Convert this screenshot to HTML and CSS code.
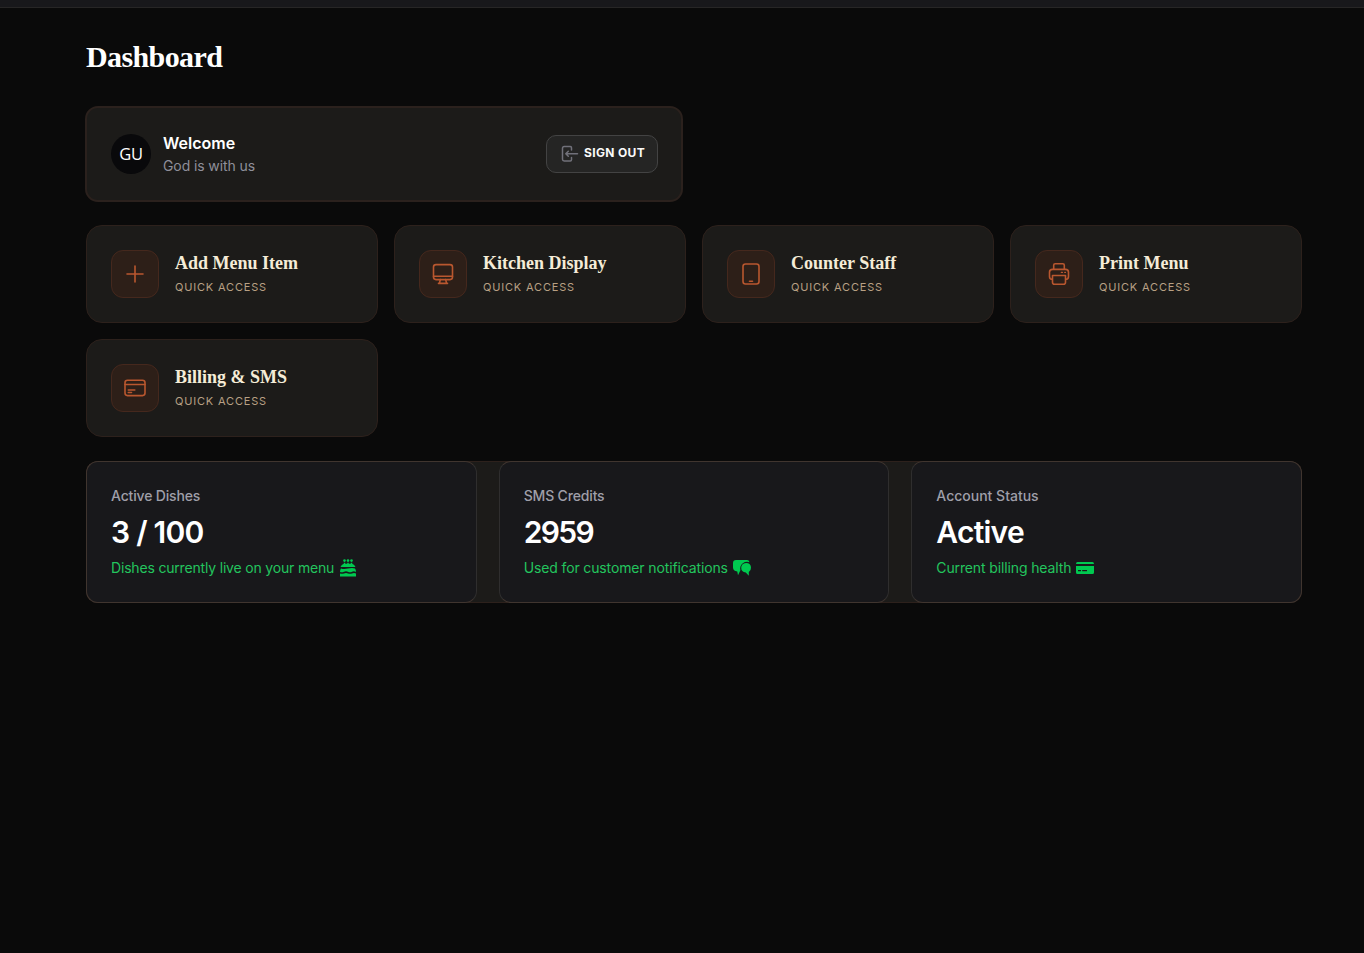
FILE: index.html
```html
<!DOCTYPE html>
<html lang="en">
<head>
<meta charset="utf-8">
<title>Dashboard</title>
<link rel="stylesheet" href="styles.css">
</head>
<body>
<header class="topbar"></header>
<main class="page">
  <h1 class="title">Dashboard</h1>
  <section class="welcome">
    <div class="avatar">GU</div>
    <div class="greeting">
      <div class="greeting-title"><span>Welcome</span></div>
      <div class="greeting-sub"><span>God is with us</span></div>
    </div>
    <button class="signout">
      <svg width="18" height="18" viewBox="0 0 18 18" fill="none" stroke="currentColor" stroke-width="1.5" stroke-linecap="round" stroke-linejoin="round"><path d="M10.500 5V2.700Q10.500 1.500 9.300 1.500H3.200Q1.500 1.500 1.500 3.200V14.300Q1.500 16 3.200 16H9.300Q10.500 16 10.500 14.800V12.500M16.500 8.800H5M7.300 6.300L4.800 8.800L7.300 11.300"/></svg>
      <span>SIGN OUT</span>
    </button>
  </section>
  <section class="actions">
    <a class="action">
      <span class="tile"><svg width="24" height="24" viewBox="0 0 24 24"><path d="M12 4v16M4 12h16"/></svg></span>
      <span class="action-text"><span class="action-name">Add Menu Item</span><span class="action-sub">QUICK ACCESS</span></span>
    </a>
    <a class="action">
      <span class="tile"><svg width="24" height="24" viewBox="0 0 24 24"><rect x="2.500" y="2.600" width="19" height="15" rx="2.500"/><path d="M2.500 14.300h19M9.300 17.600l-.8 3.600M14.700 17.600l.8 3.600M7.500 21.400h9"/></svg></span>
      <span class="action-text"><span class="action-name">Kitchen Display</span><span class="action-sub">QUICK ACCESS</span></span>
    </a>
    <a class="action">
      <span class="tile"><svg width="24" height="24" viewBox="0 0 24 24"><rect x="4" y="2" width="16" height="20" rx="2.500"/><path d="M10.500 19.300h3"/></svg></span>
      <span class="action-text"><span class="action-name">Counter Staff</span><span class="action-sub">QUICK ACCESS</span></span>
    </a>
    <a class="action">
      <span class="tile"><svg width="24" height="24" viewBox="0 0 24 24"><path d="M6.700 7.300V3.300Q6.700 1.800 8.200 1.800h7.600Q17.300 1.800 17.300 3.300v4M5.500 17.500Q2.500 17.500 2.500 14.500V10.300Q2.500 7.400 5.500 7.400h13Q21.500 7.400 21.500 10.300v4.200Q21.500 17.500 18.500 17.500M5.500 13.500h13v6.700Q18.500 22.200 16.500 22.200h-9Q5.500 22.200 5.500 20.200z"/><path d="M14.300 10.400h1.200M17.700 10.400h.8" stroke-width="1.200"/></svg></span>
      <span class="action-text"><span class="action-name">Print Menu</span><span class="action-sub">QUICK ACCESS</span></span>
    </a>
    <a class="action">
      <span class="tile"><svg width="24" height="24" viewBox="0 0 24 24"><rect x="2" y="4.300" width="20" height="15.300" rx="2.500"/><path d="M2 8.500h20M5.300 14h6.500M5.300 16.500h3.200"/></svg></span>
      <span class="action-text"><span class="action-name">Billing &amp; SMS</span><span class="action-sub">QUICK ACCESS</span></span>
    </a>
  </section>
  <section class="stats">
    <article class="stat dishes">
      <div class="label">Active Dishes</div>
      <div class="value">3 / 100</div>
      <div class="note"><span>Dishes currently live on your menu</span>
        <svg width="18" height="18" viewBox="0 0 18 18"><circle cx="5.500" cy="1.600" r="1.300"/><circle cx="9" cy="1.600" r="1.300"/><circle cx="12.500" cy="1.600" r="1.300"/><path d="M4.800 3.700H6.200V4.700H8.300V3.700H9.700V4.700H11.800V3.700H13.200V4.700Q15.600 5.500 16.500 8H1.500Q2.400 5.500 4.800 4.700zM2 9.500Q5 10.500 9 9.600T16 9.500Q17 10.500 17 13Q15 11.800 13 12.800T9 12.800T5 12.800T1 13Q1 10.500 2 9.500zM1 14.400Q3 15.300 5 14.400T9 14.400T13 14.400T17 14.400V17.500H1z"/></svg></div>
    </article>
    <article class="stat sms">
      <div class="label">SMS Credits</div>
      <div class="value">2959</div>
      <div class="note"><span>Used for customer notifications</span>
        <svg width="18" height="18" viewBox="0 0 18 18"><path d="M3 1h11Q16 1 16.500 3.200Q13 2 9.800 4.200Q6.400 7 7.400 11.300L5 16.300L4.300 12.500Q0 12 0 8.500V4Q0 1 3 1z"/><path d="M13 4Q18 4 18 8.700Q18 11.800 15.800 13V16.800L12.800 13.600Q8.200 13 8.200 8.800T13 4z"/></svg></div>
    </article>
    <article class="stat account">
      <div class="label">Account Status</div>
      <div class="value">Active</div>
      <div class="note"><span>Current billing health</span>
        <svg width="18" height="18" viewBox="0 0 18 18"><path fill-rule="evenodd" d="M1.500 3h15Q18 3 18 5H0Q0 3 1.500 3zM0 7H18V13.500Q18 15 16.500 15H1.500Q0 15 0 13.500zM2 11V12.200H5V11zM6.200 11V12.200H11V11z"/></svg></div>
    </article>
  </section>
</main>
</body>
</html>
```

FILE: styles.css
```css
* { box-sizing: border-box; }
body { margin: 0; min-height: 100vh; background: #0a0a0a; color: #fff; font-family: Inter, "Liberation Sans", sans-serif; }
.topbar { height: 8px; background: #18181b; border-bottom: 1px solid #272626; }
.page { width: 1216px; margin-left: 86px; padding-top: 31px; }
.title { margin: 0; height: 36px; font: bold 30px/36px "Liberation Serif", serif; letter-spacing: -0.6px; }
.welcome { display: flex; align-items: center; width: 598px; height: 96px; margin: 31px 0 0 -1px; padding: 0 23px 0 24px; background: #1c1b19; border: 2px solid #2b211d; border-radius: 13px; }
.avatar { width: 40px; height: 40px; border-radius: 50%; background: #09090b; font: 16.500px/39px "Open Sans", sans-serif; letter-spacing: -0.3px; text-align: center; }
.greeting { margin-left: 12px; flex: 1; }
.greeting-title { font-size: 16px; font-weight: 600; line-height: 22px; letter-spacing: 0; }
.greeting-sub { font-size: 14px; line-height: 20px; padding-top: 2px; color: #8f8f9a; letter-spacing: -0.1px; }
.signout { display: flex; align-items: center; gap: 6px; width: 112px; height: 38px; padding: 0 0 0 14px; border: 1px solid #434343; border-radius: 10px; background: #252524; color: #71717a; font: 700 12px/16px Inter, sans-serif; }
.signout span { color: #fafafa; letter-spacing: 0.35px; margin: -2px 0 0 -1px; }
.actions { display: grid; grid-template-columns: repeat(4, 292px); gap: 16px; margin-top: 23px; }
.action { display: flex; align-items: center; gap: 16px; height: 98px; padding: 0 24px; background: #1c1b19; border: 1px solid #2d211c; border-radius: 16px; }
.tile { display: grid; place-items: center; width: 48px; height: 48px; border: 1px solid #45281d; border-radius: 12px; background: #2d1f18; }
.tile svg { fill: none; stroke: #b9572f; stroke-width: 1.6; stroke-linecap: round; stroke-linejoin: round; }
.action-text { display: flex; flex-direction: column; align-items: flex-start; }
.action-name { font: bold 18px/28px "Liberation Serif", serif; color: #f5ecd7; white-space: nowrap; margin-top: -4px; }
.action-sub { font-size: 11px; line-height: 16px; letter-spacing: 0.82px; color: #b8a084; margin-top: 2px; }
.stats { display: grid; grid-template-columns: repeat(3, 1fr); gap: 22px; height: 142px; margin-top: 24px; background: #1c1b19; border-radius: 12px; box-shadow: inset 0 0 0 1px #2d211c; }
.stat { height: 142px; padding: 24px; background: #18181b; border: 1px solid #2f2e2e; border-top-color: #40352f; border-bottom-color: #40352f; border-radius: 12px; }
.stat:first-child { border-left-color: #40352f; }
.stat:last-child { border-right-color: #40352f; }
.label { font-size: 14px; font-weight: 500; line-height: 20px; color: #9f9fa9; letter-spacing: -0.16px; }
.value { font-size: 30px; font-weight: 600; line-height: 36px; margin-top: 8px; letter-spacing: -0.75px; white-space: nowrap; }
.note { display: flex; align-items: center; gap: 5px; height: 20px; margin-top: 8px; font-size: 14px; line-height: 20px; letter-spacing: -0.13px; color: #23c55e; white-space: nowrap; }
.note svg { fill: #00c950; }
.dishes .note { letter-spacing: -0.18px; }
.sms .value { letter-spacing: -1.6px; }
.account .label { letter-spacing: 0; }
```
